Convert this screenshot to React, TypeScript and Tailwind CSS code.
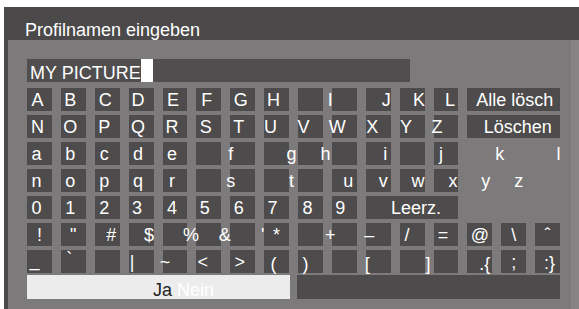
import React from "react";

type Cell = {
  t?: string;
  dx?: string;
  box?: boolean;
  span?: boolean;
};

const K = (t: string, dx = "translate-x-[-3px]"): Cell => ({ t, dx, box: true });
const E: Cell = { box: true };
const N = (t?: string, dx = ""): Cell => ({ t, dx, box: false });
const W = (t: string, dx = ""): Cell => ({ t, dx, box: true, span: true });

const rows: Cell[][] = [
  [
    K("A", "translate-x-[-2px]"),
    K("B"),
    K("C", "translate-x-[-2px]"),
    K("D"),
    K("E", "translate-x-[-2px]"),
    K("F", "translate-x-[-2px]"),
    K("G", "translate-x-[-2px]"),
    K("H"),
    E,
    K("I", "translate-x-[-14px]"),
    K("J", "translate-x-[8px]"),
    K("K", "translate-x-[7px]"),
    K("L", "translate-x-[4px]"),
    W("Alle lösch", "translate-x-[1px]"),
  ],
  [
    K("N", "translate-x-[-2px]"),
    K("O"),
    K("P"),
    K("Q"),
    K("R"),
    K("S"),
    K("T", "translate-x-[-4px]"),
    K("U", "translate-x-[-6px]"),
    K("V", "translate-x-[-7px]"),
    K("W", "translate-x-[-7px]"),
    K("X", "translate-x-[-6px]"),
    K("Y", "translate-x-[-6px]"),
    K("Z", "translate-x-[-9px]"),
    W("Löschen", "translate-x-[4px]"),
  ],
  [
    K("a"),
    K("b"),
    K("c"),
    K("d"),
    K("e"),
    E,
    K("f", "translate-x-[-12px]"),
    K("g", "translate-x-[15px]"),
    K("h", "translate-x-[15px]"),
    E,
    K("i", "translate-x-[7px]"),
    E,
    K("j", "translate-x-[-5px]"),
    N("k", "translate-x-[20px]"),
    N(),
    N("l", "translate-x-[11px]"),
  ],
  [
    K("n"),
    K("o"),
    K("p"),
    K("q"),
    K("r"),
    E,
    K("s", "translate-x-[-12px]"),
    K("t", "translate-x-[15px]"),
    E,
    K("u", "translate-x-[4px]"),
    K("v", "translate-x-[5px]"),
    K("w", "translate-x-[6px]"),
    K("x", "translate-x-[7px]"),
    N("y", "translate-x-[6px]"),
    N("z", "translate-x-[5px]"),
    N(),
  ],
  [
    K("0"),
    K("1"),
    K("2"),
    K("3", "translate-x-[-4px]"),
    K("4"),
    K("5", "translate-x-[-4px]"),
    K("6", "translate-x-[-4px]"),
    K("7", "translate-x-[-4px]"),
    K("8"),
    K("9", "translate-x-[-4px]"),
    W("Leerz.", "translate-x-[4px]"),
    N(),
    N(),
    N(),
  ],
  [
    K("!", "translate-x-[0px]"),
    K('"', "translate-x-[0px]"),
    K("#", "translate-x-[4px]"),
    K("$", "translate-x-[8px]"),
    K("%", "translate-x-[16px]"),
    K("&", "translate-x-[16px]"),
    K("'", "translate-x-[20px]"),
    K("*", "translate-x-[0px]"),
    E,
    K("+", "translate-x-[-14px]"),
    K("–", "translate-x-[-9px]"),
    K("/", "translate-x-[-5px]"),
    K("=", "translate-x-[-3px]"),
    K("@", "translate-x-[0px]"),
    K("\\", "translate-x-[0px]"),
    K("ˆ", "translate-x-[0px]"),
  ],
  [
    K("_", "translate-x-[-5px] translate-y-[-2px]"),
    K("`", "translate-x-[-4px] translate-y-[-3px]"),
    E,
    K("|", "translate-x-[-9px]"),
    K("~", "translate-x-[-10px]"),
    K("<", "translate-x-[-6px]"),
    K(">", "translate-x-[-3px]"),
    K("(", "translate-x-[-3px] translate-y-[2px]"),
    K(")", "translate-x-[-5px] translate-y-[2px]"),
    E,
    K("[", "translate-x-[-11px] translate-y-[2px]"),
    E,
    K("]", "translate-x-[-18px] translate-y-[2px]"),
    K(".{", "translate-x-[5px] translate-y-[2px]"),
    K(";", "translate-x-[0px]"),
    K(":}", "translate-x-[2px] translate-y-[1px]"),
  ],
];

export default function App() {
  return (
    <div className="w-[579px] h-[309px] bg-white pt-[7px] overflow-hidden font-['Liberation_Sans',Arial,sans-serif] text-white">
      <div className="ml-[4px] h-[302px] border-l-[4px] border-[#4a4848] bg-[#7c7a7a] flex flex-col">
        <div className="h-[33px] bg-[#4b4949] pl-[17px] pt-[14px] text-[18px] leading-none">
          Profilnamen eingeben
        </div>
        <div className="flex-1 pl-[19px] pt-[19px] border-r-[8px] border-[#858383]">
          <div className="w-[383px] h-[23px] bg-[#504e4e] flex items-end pl-[3px]">
            <span className="text-[18px] leading-none">MY PICTURE</span>
            <span className="w-[12px] h-[23px] bg-white" />
          </div>
          <div className="mt-[6px] w-[533px] grid grid-cols-16 gap-x-[9px] gap-y-[4px]">
            {rows.map((row, r) =>
              row.map((c, i) => (
                <div
                  key={`${r}-${i}`}
                  className={`h-[23px] flex items-center justify-center text-[18px] leading-none whitespace-nowrap ${
                    c.box ? "bg-[#4d4b4b]" : ""
                  } ${c.span ? "col-span-3" : ""}`}
                >
                  {c.t && <span className={c.dx}>{c.t}</span>}
                </div>
              ))
            )}
          </div>
          <div className="mt-[2px] flex gap-[7px]">
            <div className="w-[263px] h-[24px] bg-[#ececec] flex items-end pl-[126px] text-[18px] leading-none">
              <span className="text-[#222]">Ja</span>
              <span className="ml-[5px] text-white">Nein</span>
            </div>
            <div className="w-[263px] h-[24px] bg-[#4d4b4b]" />
          </div>
        </div>
      </div>
    </div>
  );
}
